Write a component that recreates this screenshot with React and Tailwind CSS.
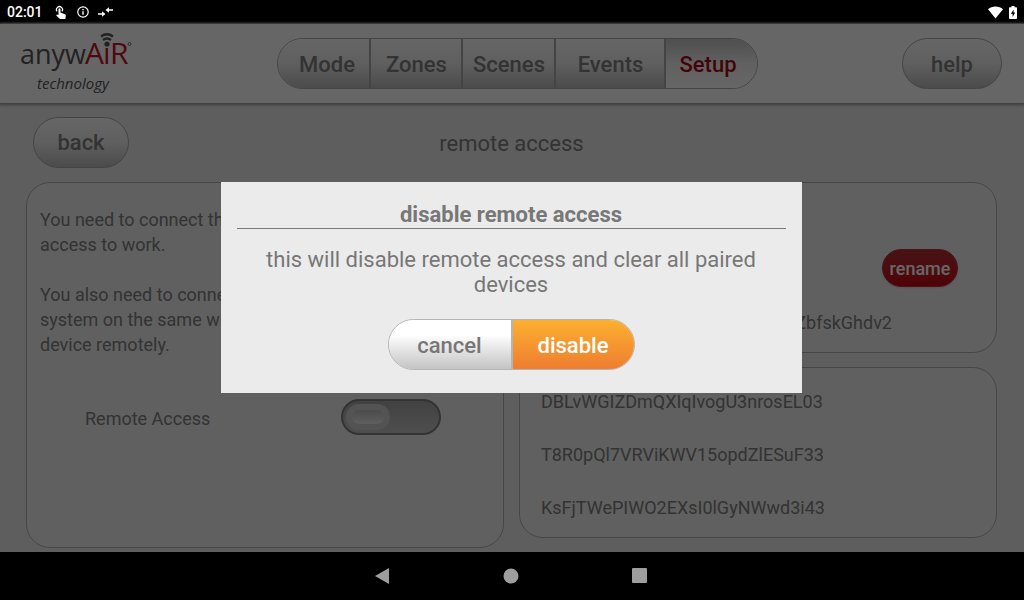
import clsx from 'clsx';

const TABS = [
  { name: 'Mode', width: 'w-[93px] pl-2' },
  { name: 'Zones', width: 'w-[92px] pl-0.5' },
  { name: 'Scenes', width: 'w-[93px] pl-0.5' },
  { name: 'Events', width: 'w-[110px] pl-0.5' },
  { name: 'Setup', width: 'w-[91px] pr-1.5' },
];

const PAIRED_DEVICES = [
  'DBLvWGIZDmQXIqIvogU3nrosEL03',
  'T8R0pQl7VRViKWV15opdZlESuF33',
  'KsFjTWePIWO2EXsI0lGyNWwd3i43',
];

export default function App() {
  return (
    <div className="min-h-screen flex flex-col bg-black font-['Roboto',sans-serif] text-[#808080]">
      <StatusBar />
      <div className="relative flex-1 flex flex-col bg-[#ebebeb]">
        <Header />
        <RemoteAccess />
        <ConfirmDialog />
      </div>
      <NavigationBar />
    </div>
  );
}

function StatusBar() {
  return (
    <div className="h-6 flex items-center justify-between pl-[7px] pr-[7px] text-white">
      <div className="flex items-center">
        <span className="w-[48px] text-sm leading-6 font-medium">02:01</span>
        <svg className="w-[12px] h-[14px]" viewBox="0 0 12 14" fill="currentColor">
          <path d="M3.500 4.200a1 1 0 0 1 2 0v3.400l4.400 1.600c.7.3 1 .8.9 1.500l-.5 3.200H5L1.200 10.400l.8-.9 1.500.5z" />
          <path d="M2 6.300a3 3 0 1 1 5 0" fill="none" stroke="currentColor" strokeWidth="1.300" />
        </svg>
        <svg className="ml-[10px] w-[12px] h-[12px]" viewBox="0 0 12 12" fill="none" stroke="currentColor" strokeWidth="1.200">
          <circle cx="6" cy="6" r="5.200" />
          <path d="M6 5.200v3.600M6 3v1.200" strokeWidth="1.400" />
        </svg>
        <svg className="ml-[9px] w-[15px] h-[10px]" viewBox="0 0 15 10" fill="currentColor">
          <path d="M0 6.200h4V4.200L7.500 7 4 9.800V7.800H0zM15 2.200h-4V.2L7.500 3 11 5.800V3.800h4z" />
        </svg>
      </div>
      <div className="flex items-center gap-[6px]">
        <svg className="w-[15px] h-[13px]" viewBox="0 0 15 13" fill="currentColor">
          <path d="M7.500 12.600 0 3.200C4-.5 11-.5 15 3.200z" />
        </svg>
        <svg className="w-[8px] h-[13px]" viewBox="0 0 8 13" fill="currentColor">
          <path d="M2.400 0h3.200v1.300h1.600q.8 0 .8.8v10q0 .9-.8.9H.8q-.8 0-.8-.9v-10q0-.8.8-.8h1.600z" />
          <path d="M4.600 3.400 1.900 7.800h1.700v3.300l2.600-4.600H4.600z" fill="#000000" />
        </svg>
      </div>
    </div>
  );
}

function Header() {
  return (
    <header className="h-[79px] shrink-0 flex items-center justify-between pl-5 pr-[22px] bg-white shadow-[0_1px_3px_1px_#999999]">
      <Logo />
      <nav className="h-[51px] flex overflow-hidden rounded-full border border-[#aaaaaa]">
        {TABS.map((tab) => {
          const active = tab.name === 'Setup';
          return (
            <button
              key={tab.name}
              className={clsx(
                'pt-0.5 text-[22px] font-medium border-[#aaaaaa]',
                tab.width,
                active
                  ? 'text-[#a80c18] bg-linear-to-b from-[#c4c4c4] via-[#f2f2f2] to-white'
                  : 'border-r-2 bg-linear-to-b from-white via-[#eeeeee] to-[#bcbcbc]'
              )}
            >
              {tab.name}
            </button>
          );
        })}
      </nav>
      <PillButton className="w-[100px]">help</PillButton>
    </header>
  );
}

function Logo() {
  return (
    <svg className="w-[112px] h-[66px]" viewBox="0 0 112 66" role="img" aria-label="anywAiR technology">
      <g fontFamily="Open Sans" fontWeight="500">
        <text x="0" y="33" fontSize="27" fill="#555555">anyw</text>
        <g fill="#c8142a" fontSize="30">
          <text x="65" y="33">A</text>
          <text x="83" y="33">ı</text>
          <text x="90" y="33">R</text>
        </g>
      </g>
      <g fill="none" stroke="#555555" strokeWidth="2.200">
        <path d="M81 5.500q6-4.500 12 0M83 9q4-3 8 0" />
      </g>
      <circle cx="87" cy="13" r="2.600" fill="#555555" />
      <circle cx="109.500" cy="13" r="1.500" fill="none" stroke="#777777" />
      <text x="17" y="58" fontFamily="Open Sans" fontSize="15" fontStyle="italic" fontWeight="500" fill="#555555">technology</text>
    </svg>
  );
}

function PillButton({ className, children }) {
  return (
    <button
      className={clsx(
        'h-[51px] pt-0.5 rounded-full border border-[#aaaaaa] text-[22px] font-medium',
        'bg-linear-to-b from-white via-[#eeeeee] to-[#bcbcbc]',
        className
      )}
    >
      {children}
    </button>
  );
}

function RemoteAccess() {
  return (
    <main className="flex-1 pl-[26px] pr-[27px] pt-[14px] pb-1 text-lg">
      <div className="grid grid-cols-[1fr_auto_1fr] items-center px-[7px]">
        <PillButton className="w-24">back</PillButton>
        <h1 className="pt-1 text-[22px]">remote access</h1>
      </div>

      <div className="mt-[14px] grid grid-cols-2 items-start gap-[15px]">
        <section className="h-[366px] rounded-3xl border border-[#b0b0b0] bg-[#f0f0f0] px-[13px] py-6 leading-[25px]">
          <p>
            You need to connect the
            <br />
            access to work.
          </p>
          <p className="mt-[25px]">
            You also need to connect
            <br />
            system on the same wifi
            <br />
            device remotely.
          </p>
          <div className="mt-[42px] flex items-center justify-between pl-[45px] pr-[49px]">
            <label htmlFor="remote-access" className="pt-0.5">Remote Access</label>
            <input
              id="remote-access"
              type="checkbox"
              role="switch"
              className="appearance-none w-[100px] h-9 p-[3px] rounded-full border-2 border-[#808080] bg-linear-to-b from-[#a4a4a4] to-[#c4c4c4] before:block before:w-[44px] before:h-[26px] before:rounded-full before:border-[6px] before:border-[#d0d0d0] before:bg-linear-to-b before:from-[#bbbbbb] before:to-[#eeeeee]"
            />
          </div>
        </section>

        <div className="flex flex-col gap-[14px]">
          <section className="h-[171px] rounded-3xl border border-[#b0b0b0] bg-[#f0f0f0] px-[21px]">
            <div className="mt-[66px] flex justify-end pr-[17px]">
              <button className="w-[76px] h-[38px] pt-0.5 rounded-full border border-[#b4343c] bg-linear-to-b from-[#b42c34] to-[#c80010] text-lg font-medium text-white shadow-sm">
                rename
              </button>
            </div>
            <p className="mt-[22px] pr-[83px] text-right leading-7">ZbfskGhdv2</p>
          </section>

          <ul className="h-[171px] rounded-3xl border border-[#b0b0b0] bg-[#f0f0f0] px-[21px] pt-[7px] leading-[53px]">
            {PAIRED_DEVICES.map((id) => (
              <li key={id}>{id}</li>
            ))}
          </ul>
        </div>
      </div>
    </main>
  );
}

function ConfirmDialog() {
  return (
    <div className="absolute inset-0 pr-0.5 pb-0.5 flex items-center justify-center bg-black/60">
      <div
        role="dialog"
        aria-labelledby="dialog-title"
        className="w-[581px] px-4 pt-[18px] pb-[23px] bg-[#ebebeb] text-center text-[22px] text-[#777777]"
      >
        <h2 id="dialog-title" className="pt-0.5 border-b border-[#777777] font-bold leading-[26px]">
          disable remote access
        </h2>
        <p className="mt-[18px] px-6 leading-[25px]">
          this will disable remote access and clear all paired devices
        </p>
        <div className="mx-auto mt-[22px] w-[247px] h-[51px] flex overflow-hidden rounded-full border border-[#b4b4b4] font-medium">
          <button className="w-[124px] pt-0.5 border-r-2 border-[#b4b4b4] bg-linear-to-b from-white from-30% to-[#c4c4c4]">
            cancel
          </button>
          <button className="flex-1 pt-0.5 bg-linear-to-b from-[#fcb02f] to-[#ee7d30] text-white">
            disable
          </button>
        </div>
      </div>
    </div>
  );
}

function NavigationBar() {
  return (
    <div className="h-12 shrink-0 flex items-center justify-center gap-[113px] pr-0.5 text-[#9e9e9e]">
      <button aria-label="Back">
        <svg className="w-4 h-4" viewBox="0 0 16 16" fill="currentColor">
          <path d="M15 0v16L1 8z" />
        </svg>
      </button>
      <button aria-label="Home">
        <svg className="w-4 h-4" viewBox="0 0 16 16" fill="currentColor">
          <circle cx="8" cy="8" r="7.500" />
        </svg>
      </button>
      <button aria-label="Recent apps">
        <svg className="w-4 h-4" viewBox="0 0 16 16" fill="currentColor">
          <rect width="15" height="15" rx="1" />
        </svg>
      </button>
    </div>
  );
}
